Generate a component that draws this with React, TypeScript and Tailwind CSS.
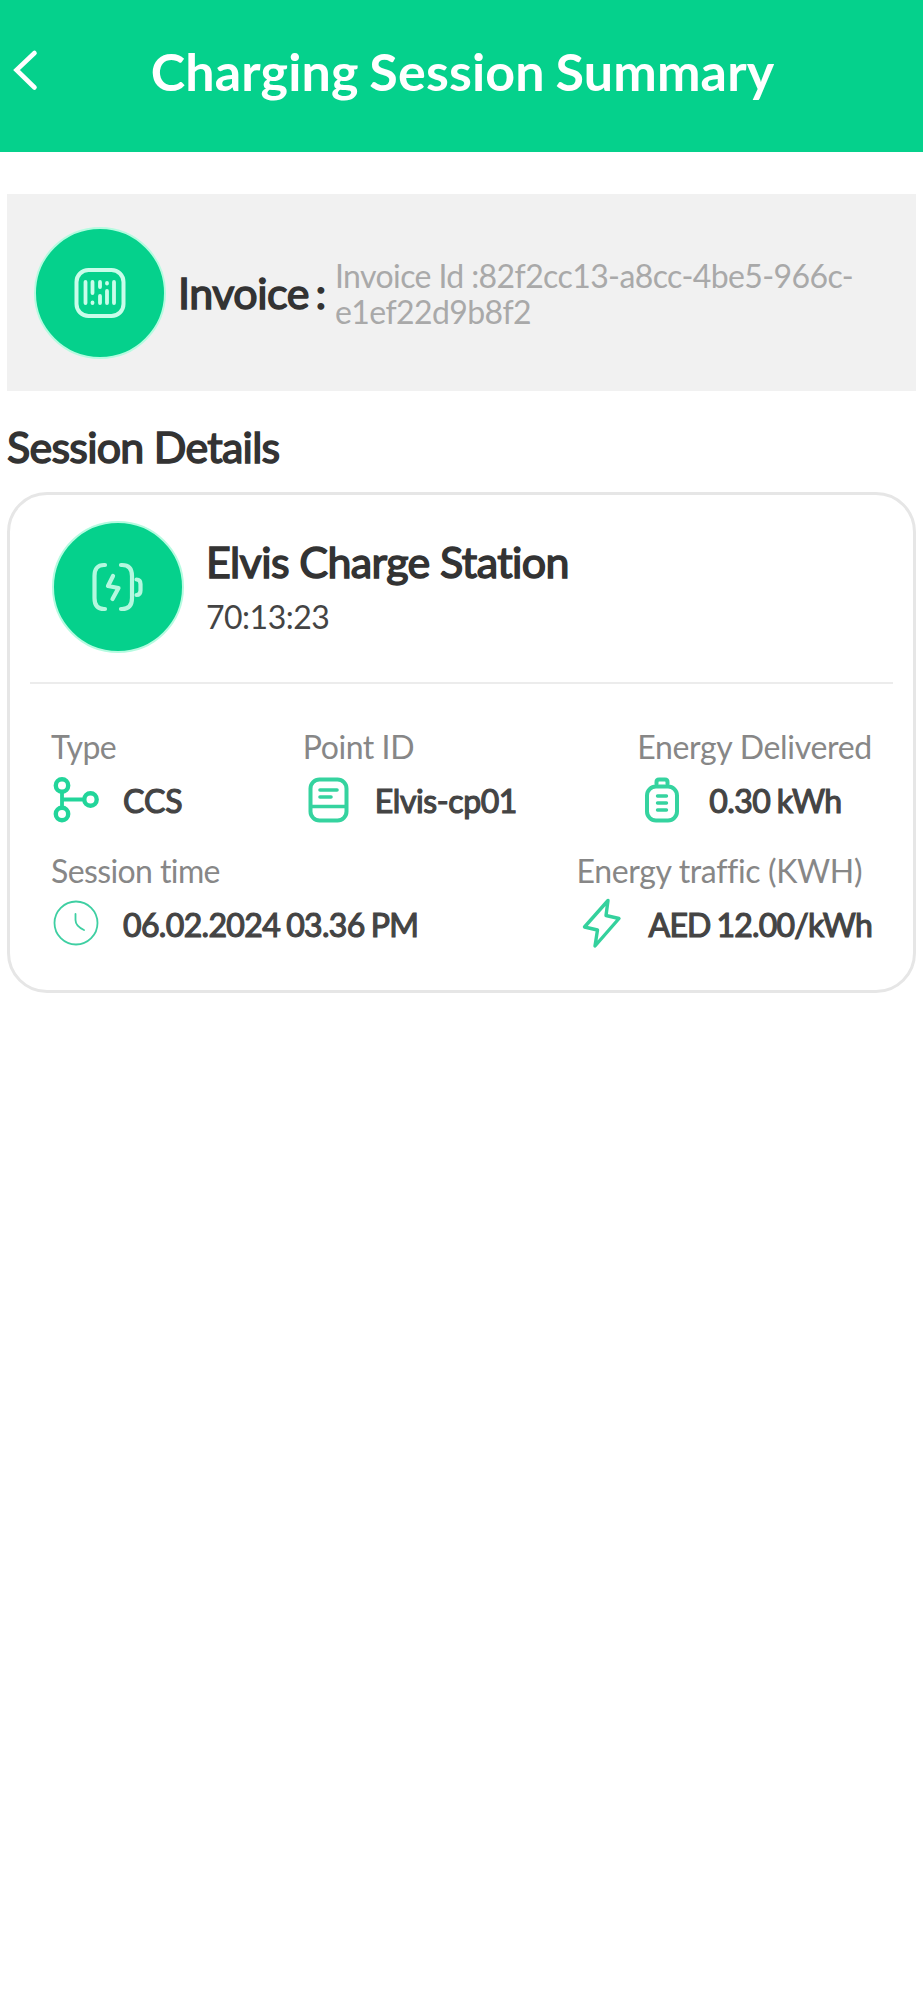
import type { ReactNode } from "react";

function BackIcon() {
  return (
    <svg width="52" height="44" viewBox="0 0 52 44" fill="none" stroke="white" strokeWidth="4.6" strokeLinecap="round" strokeLinejoin="miter">
      <path d="M34.5 4 L16.5 21 L34.5 38.5" />
    </svg>
  );
}

function BarcodeIcon() {
  return (
    <svg width="52" height="52" viewBox="0 0 52 52" fill="none" stroke="#c9fdea" strokeWidth="4" strokeLinecap="round">
      <rect x="2.5" y="3" width="47" height="46" rx="12" />
      <path d="M11.5 15v21M18.5 15v11M18.5 35.5v.5M26 15v5M26 29v7M33 16v.5M33 24v12M40 15v21" strokeWidth="3.8" />
    </svg>
  );
}

function BatteryIcon() {
  return (
    <svg width="54" height="52" viewBox="0 0 54 52" fill="none" stroke="#b4f8df" strokeWidth="4.2" strokeLinecap="round" strokeLinejoin="round">
      <path d="M14 4h-1Q3.5 4 3.5 15v22Q3.5 48 13 48h1" />
      <path d="M30 4h1Q41 4 41 15v22Q41 48 31 48h-1" />
      <path d="M22 15l-5 10 10.5 2-6 11" />
      <path d="M45.500 18.500q4 0 4 4.500v6.500q0 4.500-4 4.500" />
    </svg>
  );
}

function ConnectorIcon() {
  return (
    <svg width="48" height="48" viewBox="0 0 48 48" fill="none" stroke="#22d59a" strokeWidth="4.4">
      <circle cx="11" cy="9.5" r="6.2" />
      <circle cx="11" cy="38" r="6.2" />
      <circle cx="39.5" cy="23.5" r="6.2" />
      <path d="M11 15v17M11 23.5h22" strokeWidth="3.8" />
    </svg>
  );
}

function PointIcon() {
  return (
    <svg width="48" height="48" viewBox="0 0 48 48" fill="none" stroke="#35d39f" strokeWidth="4" strokeLinecap="round">
      <rect x="7.5" y="3.5" width="36" height="41" rx="9" />
      <path d="M8 30.5h35M17 14h17M17 21h11" strokeWidth="3.6" />
    </svg>
  );
}

function EnergyIcon() {
  return (
    <svg width="48" height="48" viewBox="0 0 48 48" fill="none" stroke="#35d39f" strokeWidth="4" strokeLinecap="round">
      <rect x="10" y="10.5" width="30" height="34" rx="9" />
      <path d="M19.5 8V6q0-2.500 2.500-2.500h6q2.500 0 2.500 2.500v2" />
      <path d="M20.500 20h9M20.500 27h9M20.500 34h9" strokeWidth="3.400" />
    </svg>
  );
}

function ClockIcon() {
  return (
    <svg width="48" height="48" viewBox="0 0 48 48" fill="none" stroke="#3ecfa2" strokeWidth="1.8" strokeLinecap="round">
      <circle cx="25" cy="23" r="21.5" />
      <path d="M24.500 14v6q0 6 8.500 10" />
    </svg>
  );
}

function BoltIcon() {
  return (
    <svg width="48" height="52" viewBox="0 0 48 52" fill="none" stroke="#34d19d" strokeWidth="3.4" strokeLinejoin="round">
      <path d="M31 2.500L7.500 29l13 3-2.500 16L42 20.500l-13-3z" />
    </svg>
  );
}

function Field({
  label,
  labelClass = "tracking-[-0.3px]",
  icon,
  value,
  valueClass,
}: {
  label: string;
  labelClass?: string;
  icon: ReactNode;
  value: string;
  valueClass?: string;
}) {
  return (
    <div>
      <div className={`text-[32px] leading-10 text-[#878787] ${labelClass}`}>{label}</div>
      <div className="mt-2.5 flex h-12 items-center gap-6">
        <span className="flex w-12 justify-center pb-0.5">{icon}</span>
        <span className={`text-[32px] leading-10 text-[#444444] [-webkit-text-stroke:1.2px_#444444] ${valueClass ?? ""}`}>
          {value}
        </span>
      </div>
    </div>
  );
}

function IconCircle({ children }: { children: ReactNode }) {
  return (
    <div className="flex size-[132px] shrink-0 items-center justify-center rounded-full border-2 border-[#b5fbe0] bg-[#05d18c]">
      {children}
    </div>
  );
}

export default function App() {
  return (
    <div className="min-h-[2000px] w-full bg-white font-[Lato,sans-serif] text-[#333333]">
      <header className="flex h-[152px] items-center bg-[#05d18c] pb-2.5">
        <BackIcon />
        <h1 className="flex-1 pr-[50px] text-center text-[52px] leading-[60px] font-bold tracking-[0.15px] text-white [word-spacing:-2px]">
          Charging Session Summary
        </h1>
      </header>

      <main className="px-[7px] pt-[42px]">
        <section className="flex h-[197px] items-center bg-[#f1f1f1] pl-[27px]">
          <IconCircle>
            <BarcodeIcon />
          </IconCircle>
          <h2 className="ml-3 w-[157px] shrink-0 text-[43px] leading-[50px] tracking-[-0.5px] whitespace-nowrap [word-spacing:-4px] [-webkit-text-stroke:1.5px_#333333]">
            Invoice :
          </h2>
          <p className="pt-[3px] text-[32px] leading-9 tracking-[-0.6px] whitespace-nowrap text-[#a9a9a9]">
            Invoice Id :82f2cc13-a8cc-4be5-966c-
            <br />
            e1ef22d9b8f2
          </p>
        </section>

        <h2 className="mt-[31px] text-[43px] leading-[50px] tracking-[-0.75px] [-webkit-text-stroke:1.5px_#333333]">
          Session Details
        </h2>

        <section className="mt-5 h-[501px] rounded-[40px] border-3 border-[#e6e6e6] px-5">
          <div className="flex items-center gap-[22px] border-b-2 border-[#ececec] pt-[26px] pb-[29px] pl-[22px]">
            <IconCircle>
              <BatteryIcon />
            </IconCircle>
            <div>
              <h3 className="text-[43px] leading-[50px] tracking-[-0.6px] [-webkit-text-stroke:1.5px_#333333]">
                Elvis Charge Station
              </h3>
              <p className="mt-2.5 text-[32px] leading-10 tracking-[-0.5px] text-[#444444]">70:13:23</p>
            </div>
          </div>
          <div className="flex justify-between px-[21px] pt-[43px]">
            <Field label="Type" labelClass="tracking-[-0.6px]" icon={<ConnectorIcon />} value="CCS" />
            <Field label="Point ID" labelClass="tracking-[-0.45px]" icon={<PointIcon />} value="Elvis-cp01" valueClass="tracking-[-0.4px]" />
            <Field
              label="Energy Delivered"
              icon={<EnergyIcon />}
              value="0.30 kWh"
              valueClass="tracking-[-0.55px] [word-spacing:-1px]"
            />
          </div>
          <div className="flex justify-between px-[21px] pt-[26px]">
            <Field
              label="Session time"
              labelClass="tracking-[-0.6px]"
              icon={<ClockIcon />}
              value="06.02.2024 03.36 PM"
              valueClass="tracking-[-0.65px] [word-spacing:-1.5px]"
            />
            <Field
              label="Energy traffic (KWH)"
              labelClass="tracking-[-0.35px] [font-variant-ligatures:common-ligatures]"
              icon={<BoltIcon />}
              value="AED 12.00/kWh"
              valueClass="tracking-[-0.8px] [word-spacing:-1.5px]"
            />
          </div>
        </section>
      </main>
    </div>
  );
}
